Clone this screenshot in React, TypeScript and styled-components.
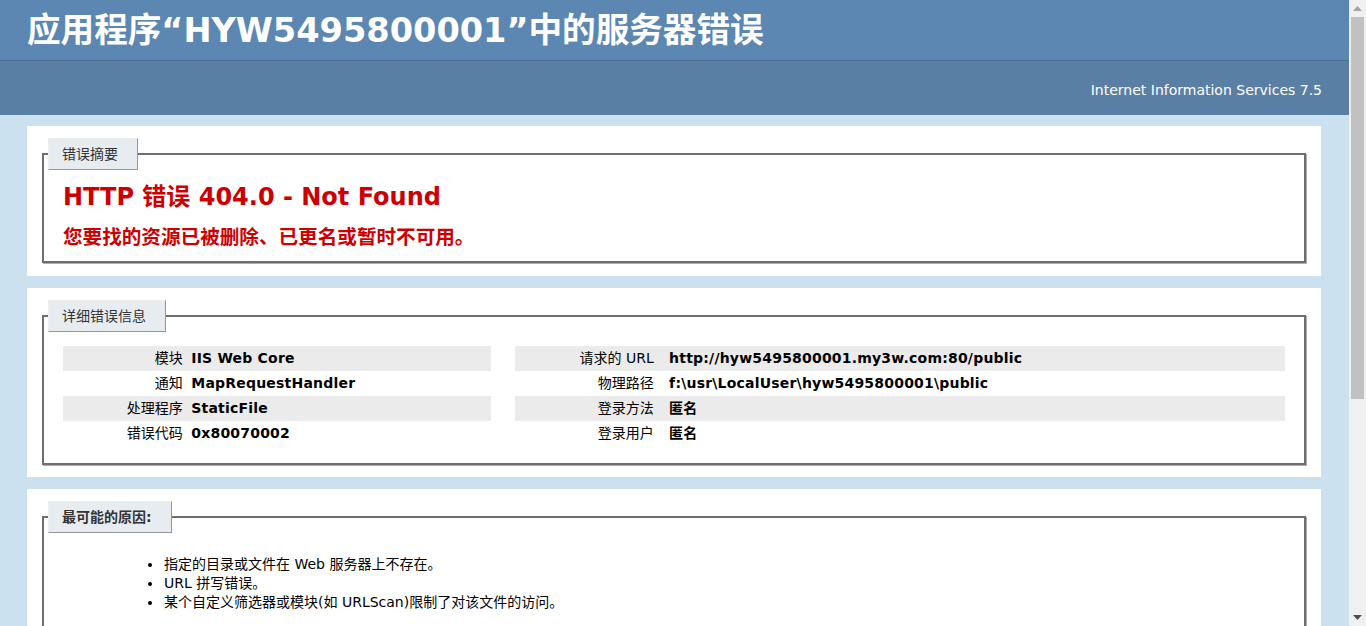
import styled, { createGlobalStyle } from 'styled-components'

const GlobalStyle = createGlobalStyle`
  html, body {
    margin: 0;
    padding: 0;
    overflow: hidden;
  }
  body {
    background: #cbe1ef;
    font-family: "DejaVu Sans", "Noto Sans CJK SC", sans-serif;
    font-size: 14px;
    color: #000;
  }
`

const Shell = styled.div`
  display: flex;
  height: 100vh;
  overflow: hidden;
`

const Page = styled.div`
  flex: 1;
  min-width: 0;
  overflow: hidden;
`

const ScrollBar = styled.div`
  width: 17px;
  flex-shrink: 0;
  display: flex;
  flex-direction: column;
  background: #f0f0f0;
`

const ScrollButton = styled.div`
  height: 17px;
  display: flex;
  align-items: center;
  justify-content: center;
`

const ScrollTrack = styled.div`
  flex: 1;
  padding: 0 2px;
`

const ScrollThumb = styled.div`
  height: 382px;
  background: #c1c1c1;
`

const Header = styled.div`
  height: 60px;
  padding: 0 27px;
  background-color: #5c87b2;
`

const Title = styled.h1`
  margin: 0;
  font-size: 33.6px;
  line-height: 62px;
  font-weight: bold;
  color: #fff;
  white-space: nowrap;
`

const ServerVersion = styled.div`
  height: 50px;
  padding: 4px 27px 0;
  background-color: #5a7fa5;
  border-top: 1px solid #4a6c8e;
  color: #fff;
  display: flex;
  align-items: center;
  justify-content: flex-end;
  font-size: 14px;
`

const Content = styled.div`
  margin: 0 28px 0 27px;
  padding-top: 11px;
  display: flex;
  flex-direction: column;
  gap: 12px;
`

const Container = styled.div`
  background: #fff;
  padding: 10px;
`

const Fieldset = styled.fieldset<{ $bottom: number }>`
  margin: 2px 5px ${(p) => (p.$bottom === 17 ? 2 : 3)}px;
  padding: 0 19px ${(p) => p.$bottom}px;
  border: 2px solid #6e6e6e;
  box-shadow: 1px 1px 0 #adadad;
  min-width: 0;
`

const Legend = styled.legend<{ $bold?: boolean }>`
  margin-left: -15px;
  padding: 0 19px 0 13px;
  height: 30px;
  line-height: 30px;
  box-sizing: content-box;
  color: #333;
  background: #e7ecf0;
  border-top: 1px solid #ededed;
  border-left: 1px solid #ededed;
  border-right: 1px solid #969696;
  border-bottom: 1px solid #969696;
  font-size: 14px;
  font-weight: ${(p) => (p.$bold ? 'bold' : 'normal')};
`

const ErrorTitle = styled.h2`
  margin: 13px 0 0;
  font-size: 24px;
  line-height: 29px;
  font-weight: bold;
  color: #cc0000;
`

const ErrorDesc = styled.h3`
  margin: 14px 0 0;
  font-size: 19.6px;
  line-height: 24px;
  font-weight: bold;
  color: #cc0000;
`

const Details = styled.div`
  margin-top: 14px;
  display: grid;
  grid-template-columns: 35% 63%;
  column-gap: 2%;
`

const Table = styled.table<{ $labelWidth: string }>`
  width: 100%;
  border-collapse: collapse;
  border: none;

  th {
    width: ${(p) => p.$labelWidth};
    padding: 4px 2% 4px 0;
    text-align: right;
    font-weight: normal;
    vertical-align: top;
    line-height: 17px;
  }
  td {
    padding: 4px 0;
    text-align: left;
    font-weight: bold;
    vertical-align: top;
    line-height: 17px;
    letter-spacing: 0.2px;
  }
`

const Row = styled.tr<{ $alt?: boolean }>`
  background-color: ${(p) => (p.$alt ? '#ebebeb' : 'transparent')};
`

const List = styled.ul<{ $top: number }>`
  margin: ${(p) => p.$top}px 0 14px;
  padding-left: 100px;
  line-height: 19px;

  li {
    padding-left: 1px;
  }
`

const left = [
  ['模块', 'IIS Web Core'],
  ['通知', 'MapRequestHandler'],
  ['处理程序', 'StaticFile'],
  ['错误代码', '0x80070002'],
]

const right = [
  ['请求的 URL', 'http://hyw5495800001.my3w.com:80/public'],
  ['物理路径', 'f:\\usr\\LocalUser\\hyw5495800001\\public'],
  ['登录方法', '匿名'],
  ['登录用户', '匿名'],
]

const DetailTable = ({ rows, labelWidth }: { rows: string[][]; labelWidth: string }) => (
  <Table $labelWidth={labelWidth}>
    <tbody>
      {rows.map(([k, v], i) => (
        <Row key={k} $alt={i % 2 === 0}>
          <th>{k}</th>
          <td>{v}</td>
        </Row>
      ))}
    </tbody>
  </Table>
)

const Arrow = ({ up, color }: { up?: boolean; color: string }) => (
  <svg width="9" height="5" viewBox="0 0 9 5">
    <path d={up ? 'M0 5 L4.5 0 L9 5 Z' : 'M0 0 L4.5 5 L9 0 Z'} fill={color} />
  </svg>
)

export default function App() {
  return (
    <Shell>
      <GlobalStyle />
      <Page>
        <Header>
          <Title>应用程序“HYW5495800001”中的服务器错误</Title>
        </Header>
        <ServerVersion>Internet Information Services 7.5</ServerVersion>
        <Content>
          <Container>
            <Fieldset $bottom={11}>
              <Legend>错误摘要</Legend>
              <ErrorTitle>HTTP 错误 404.0 - Not Found</ErrorTitle>
              <ErrorDesc>您要找的资源已被删除、已更名或暂时不可用。</ErrorDesc>
            </Fieldset>
          </Container>
          <Container>
            <Fieldset $bottom={17}>
              <Legend>详细错误信息</Legend>
              <Details>
                <DetailTable rows={left} labelWidth="30%" />
                <DetailTable rows={right} labelWidth="20%" />
              </Details>
            </Fieldset>
          </Container>
          <Container>
            <Fieldset $bottom={13}>
              <Legend $bold>最可能的原因:</Legend>
              <List $top={22}>
                <li>指定的目录或文件在 Web 服务器上不存在。</li>
                <li>URL 拼写错误。</li>
                <li>某个自定义筛选器或模块(如 URLScan)限制了对该文件的访问。</li>
              </List>
            </Fieldset>
          </Container>
        </Content>
      </Page>
      <ScrollBar>
        <ScrollButton>
          <Arrow up color="#a3a3a3" />
        </ScrollButton>
        <ScrollTrack>
          <ScrollThumb />
        </ScrollTrack>
        <ScrollButton>
          <Arrow color="#505050" />
        </ScrollButton>
      </ScrollBar>
    </Shell>
  )
}
